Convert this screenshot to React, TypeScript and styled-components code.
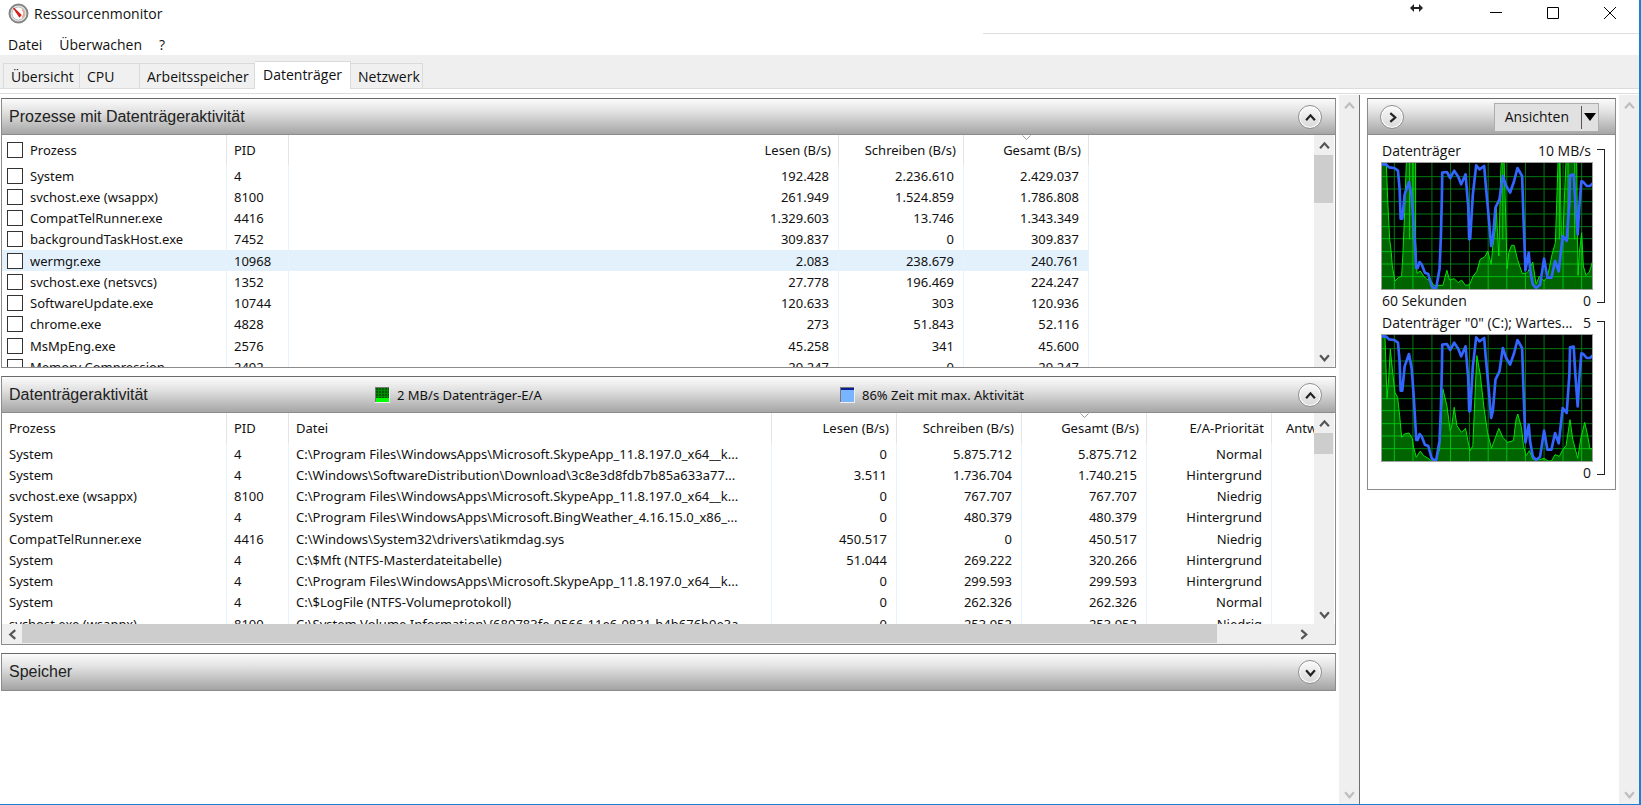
import React from "react";
import styled, { createGlobalStyle, css } from "styled-components";

const uiFont = `"Open Sans", "Noto Sans", sans-serif`;
const listFont = `"Noto Sans", "Open Sans", sans-serif`;
const edge = "#8c8c8c";

const GlobalStyle = createGlobalStyle`
  *, *::before, *::after { box-sizing: border-box; }
  body { margin: 0; background: #fff; color: #111; font: 13px/20px ${uiFont}; }
  button { font: inherit; color: inherit; margin: 0; padding: 0; border: 0; background: none; }
`;

const Window = styled.div`
  display: flex;
  flex-direction: column;
  height: 100vh;
  min-height: 720px;
  min-width: 1100px;
  overflow: hidden;
  border: solid #1a80d4;
  border-width: 0 2px 1px 0;
`;

const TitleBar = styled.header`
  display: flex;
  align-items: flex-start;
  height: 33px;
  padding: 3px 4px 0 8px;
`;

const Title = styled.h1`
  flex: 1;
  margin: 1px 0 0 5px;
  font-size: 14px;
  line-height: 20px;
  font-weight: 400;
`;

const WindowButtons = styled.div`
  display: flex;
  gap: 6px;
`;

const CaptionButton = styled.button`
  display: grid;
  place-items: center;
  width: 51px;
  height: 20px;
`;

const ResizeMark = styled.svg`
  margin-right: 46px;
`;

const MenuBar = styled.nav`
  display: flex;
  gap: 17px;
  height: 22px;
  padding: 2px 0 0 8px;
  position: relative;
  &::before {
    content: "";
    position: absolute;
    top: 0;
    right: 0;
    width: 40%;
    height: 1px;
    background: #dedede;
  }
`;

const MenuButton = styled.button`
  font-size: 14px;
  line-height: 20px;
`;

const TabStrip = styled.div`
  display: flex;
  align-items: flex-end;
  height: 34px;
  padding-left: 3px;
  background: #efefef;
  border-bottom: 1px solid #dcdcdc;
`;

const Tab = styled.button<{ $width: number; $active?: boolean }>`
  width: ${(p) => p.$width}px;
  height: 25px;
  padding: 1px 0 0 7px;
  text-align: left;
  white-space: nowrap;
  font-size: 14px;
  line-height: 20px;
  background: #f0f0f0;
  border: 1px solid #dadada;
  border-bottom: 0;
  & + & { border-left: 0; }
  ${(p) =>
    p.$active &&
    css`
      height: 28px;
      margin-bottom: -1px;
      padding: 0 0 2px 8px;
      background: #fff;
    `}
`;

const PageEdge = styled.div`
  height: 5px;
  border-bottom: 1px solid #dcdcdc;
`;

const Main = styled.main`
  display: flex;
  flex: 1;
  min-height: 0;
  padding-top: 1px;
`;

const LeftColumn = styled.section`
  flex: 1;
  min-width: 0;
  display: flex;
  flex-direction: column;
  gap: 8px;
  padding: 3px 3px 0 1px;
`;

const RightColumn = styled.aside`
  width: 260px;
  padding: 3px 3px 0 7px;
  border-left: 1px solid #6e6e6e;
`;

const Panel = styled.section`
  border: 1px solid ${edge};
  border-top-color: #6a6a6a;
  background: #fff;
`;

const PanelHeader = styled.div<{ $side?: boolean }>`
  display: flex;
  align-items: center;
  height: 36px;
  padding: ${(p) => (p.$side ? "0 16px 0 12px" : "0 13px 0 7px")};
  background: linear-gradient(#fbfbfb, #e2e2e2 35%, #a3a3a3);
`;

const PanelBody = styled.div`
  border-top: 1px solid ${edge};
  margin-top: -1px;
`;

const PanelTitle = styled.h2`
  flex: 1;
  margin: 0;
  font: 400 16px/20px "Liberation Sans", Arial, sans-serif;
  color: #222;
`;

const HeaderGrid = styled.div`
  flex: 1;
  display: grid;
  grid-template-columns: 366px 465px 1fr;
  align-items: center;
`;

const Stat = styled.span`
  display: flex;
  align-items: center;
  gap: 7px;
  font-family: ${listFont};
`;

const RoundButton = styled.button`
  display: grid;
  place-items: center;
  width: 24px;
  height: 24px;
  border: 1px solid #8f8f8f;
  border-radius: 50%;
  background: linear-gradient(#fafafa, #d8d8d8);
  box-shadow: inset 0 0 0 1px #fff;
`;

const ListBody = styled.div<{ $height: number }>`
  display: flex;
  height: ${(p) => p.$height}px;
  padding-right: 1px;
`;

const ListView = styled.div`
  flex: 1;
  min-width: 0;
  overflow: hidden;
`;

const DataTable = styled.table`
  width: 100%;
  table-layout: fixed;
  border-collapse: separate;
  border-spacing: 0;
  font-family: ${listFont};
`;

const Row = styled.tr<{ $selected?: boolean }>`
  height: 21px;
  &:nth-child(4n) { height: 22px; }
  ${(p) =>
    p.$selected &&
    css`
      td:not(:last-child) { background: #e3f1fd; }
    `}
`;

const HeadCell = styled.th<{ $right?: boolean; $last?: boolean }>`
  position: relative;
  height: 30px;
  padding: 0 7px 0 ${(p) => (p.$last ? 14 : 7)}px;
  font-weight: 400;
  line-height: 20px;
  white-space: nowrap;
  overflow: hidden;
  text-align: ${(p) => (p.$right ? "right" : "left")};
  border-right: ${(p) => (p.$last ? "0" : "1px solid #e4e4e4")};
  ${(p) => p.$last && "padding-right: 0;"}
`;

const Cell = styled.td<{ $right?: boolean; $last?: boolean }>`
  padding: 0 ${(p) => (p.$right ? 9 : 0)}px 0 7px;
  line-height: 20px;
  white-space: nowrap;
  overflow: hidden;
  text-overflow: ellipsis;
  text-align: ${(p) => (p.$right ? "right" : "left")};
  border-right: ${(p) => (p.$last ? "0" : "1px solid #e8f2fb")};
`;

const SortMark = styled.svg`
  position: absolute;
  top: 0;
  left: 50%;
  margin-left: -4px;
`;

const CheckLabel = styled.label`
  display: flex;
  align-items: center;
  gap: 7px;
  margin-left: -2px;
`;

const CheckBox = styled.input`
  appearance: none;
  flex: none;
  width: 16px;
  height: 16px;
  margin: 0;
  border: 1px solid #333;
  background: #fff;
`;

const Track = styled.div<{ $horizontal?: boolean }>`
  flex: none;
  display: flex;
  flex-direction: ${(p) => (p.$horizontal ? "row" : "column")};
  background: #efefef;
  ${(p) => (p.$horizontal ? "height: 20px; padding-right: 22px;" : "width: 20px;")}
`;

const ArrowButton = styled.button`
  flex: none;
  display: grid;
  place-items: center;
  width: 20px;
  height: 20px;
`;

const Thumb = styled.div<{ $size: string; $horizontal?: boolean }>`
  background: #cdcdcd;
  ${(p) => (p.$horizontal ? `width: ${p.$size}; height: 19px;` : `height: ${p.$size}; width: 19px;`)}
`;

const Spacer = styled.div`
  flex: 1;
`;

const SplitButton = styled.div`
  display: flex;
  align-items: center;
  height: 29px;
  background: #e1e1e1;
  border: 1px solid #adadad;
`;

const ViewsButton = styled.button`
  padding: 0 12px 0 10px;
  line-height: 20px;
  font-size: 14px;
`;

const ViewsArrow = styled.button`
  display: grid;
  place-items: center;
  width: 17px;
  height: 23px;
  border-left: 1px solid #555;
`;

const Charts = styled.div`
  display: flex;
  flex-direction: column;
  padding: 5px 10px 5px 13px;
`;

const ChartBlock = styled.figure`
  display: grid;
  grid-template-columns: 1fr 12px;
  margin: 0;
`;

const ChartLine = styled.div`
  display: flex;
  justify-content: space-between;
  gap: 6px;
  height: 22px;
  padding: 0 2px 0 1px;
  font-size: 14px;
  line-height: 22px;
  white-space: nowrap;
`;

const ChartName = styled.figcaption`
  overflow: hidden;
  text-overflow: ellipsis;
`;

const Bracket = styled.div`
  margin: 9px 0 9px 4px;
  border: solid #222;
  border-width: 1px 1px 1px 0;
`;

const Plot = styled.svg`
  display: block;
  width: 100%;
  height: 128px;
  border: 1px solid #a0a0a0;
  background: #000;
`;

type Direction = "up" | "down" | "left" | "right";
const chevrons: Record<Direction, string> = {
  up: "M1 7.500 5 3 9 7.500",
  down: "M1 3 5 7.500 9 3",
  left: "M7.500 1 3 5 7.500 9",
  right: "M3 1 7.500 5 3 9",
};

function Chevron({ to, color = "#555", weight = 2 }: { to: Direction; color?: string; weight?: number }) {
  return (
    <svg width="11" height="11" viewBox="0 0 10 10" aria-hidden="true">
      <path d={chevrons[to]} fill="none" stroke={color} strokeWidth={weight} />
    </svg>
  );
}

function VerticalScroll({ thumb, disabled }: { thumb?: string; disabled?: boolean }) {
  const color = disabled ? "#bdbdbd" : "#555";
  return (
    <Track>
      <ArrowButton aria-label="Nach oben" disabled={disabled}>
        <Chevron to="up" color={color} />
      </ArrowButton>
      {thumb && <Thumb $size={thumb} />}
      <Spacer />
      <ArrowButton aria-label="Nach unten" disabled={disabled}>
        <Chevron to="down" color={color} />
      </ArrowButton>
    </Track>
  );
}

function HorizontalScroll() {
  return (
    <Track $horizontal>
      <ArrowButton aria-label="Nach links">
        <Chevron to="left" />
      </ArrowButton>
      <Spacer>
        <Thumb $horizontal $size="94%" />
      </Spacer>
      <ArrowButton aria-label="Nach rechts">
        <Chevron to="right" />
      </ArrowButton>
    </Track>
  );
}

function SortArrow() {
  return (
    <SortMark width="9" height="6" viewBox="0 0 9 6" aria-hidden="true">
      <path d="M0.500 0.500 4.500 4.500 8.500 0.500" fill="none" stroke="#999" />
    </SortMark>
  );
}

const processes = [
  ["System", "4", "192.428", "2.236.610", "2.429.037"],
  ["svchost.exe (wsappx)", "8100", "261.949", "1.524.859", "1.786.808"],
  ["CompatTelRunner.exe", "4416", "1.329.603", "13.746", "1.343.349"],
  ["backgroundTaskHost.exe", "7452", "309.837", "0", "309.837"],
  ["wermgr.exe", "10968", "2.083", "238.679", "240.761"],
  ["svchost.exe (netsvcs)", "1352", "27.778", "196.469", "224.247"],
  ["SoftwareUpdate.exe", "10744", "120.633", "303", "120.936"],
  ["chrome.exe", "4828", "273", "51.843", "52.116"],
  ["MsMpEng.exe", "2576", "45.258", "341", "45.600"],
  ["Memory Compression", "2492", "29.247", "0", "29.247"],
];

const activity = [
  ["System", "4", "C:\\Program Files\\WindowsApps\\Microsoft.SkypeApp_11.8.197.0_x64__k...", "0", "5.875.712", "5.875.712", "Normal"],
  ["System", "4", "C:\\Windows\\SoftwareDistribution\\Download\\3c8e3d8fdb7b85a633a77...", "3.511", "1.736.704", "1.740.215", "Hintergrund"],
  ["svchost.exe (wsappx)", "8100", "C:\\Program Files\\WindowsApps\\Microsoft.SkypeApp_11.8.197.0_x64__k...", "0", "767.707", "767.707", "Niedrig"],
  ["System", "4", "C:\\Program Files\\WindowsApps\\Microsoft.BingWeather_4.16.15.0_x86_...", "0", "480.379", "480.379", "Hintergrund"],
  ["CompatTelRunner.exe", "4416", "C:\\Windows\\System32\\drivers\\atikmdag.sys", "450.517", "0", "450.517", "Niedrig"],
  ["System", "4", "C:\\$Mft (NTFS-Masterdateitabelle)", "51.044", "269.222", "320.266", "Hintergrund"],
  ["System", "4", "C:\\Program Files\\WindowsApps\\Microsoft.SkypeApp_11.8.197.0_x64__k...", "0", "299.593", "299.593", "Hintergrund"],
  ["System", "4", "C:\\$LogFile (NTFS-Volumeprotokoll)", "0", "262.326", "262.326", "Normal"],
  ["svchost.exe (wsappx)", "8100", "C:\\System Volume Information\\{689783fe-0566-11e6-9831-b4b676b9e3a...", "0", "253.952", "253.952", "Niedrig"],
];

const activeTime =
  "66,75 80,76 88,84 104,86 115,94 120,150 123,238 128,238 135,165 148,128 156,170 162,250 170,386 174,386 180,368 186,375 196,400 206,404 216,440 222,446 230,445 240,388 244,290 247,170 248,100 262,98 272,116 284,94 296,112 305,135 318,105 326,200 329,300 332,298 340,165 350,78 360,90 374,80 379,140 386,215 395,320 400,300 408,205 420,180 430,110 440,140 452,160 464,125 474,86 488,110 492,230 498,393 508,340 512,390 520,435 530,446 542,436 554,358 564,415 576,415 587,365 598,396 610,290 622,305 630,190 632,108 643,106 648,190 655,285 660,200 666,126 672,128 682,140 692,140 700,132";
const throughput =
  "66,70 80,72 84,180 90,300 95,340 98,380 106,425 116,415 126,410 130,340 135,220 140,72 150,66 160,66 168,72 168,300 172,402 182,395 192,410 202,420 214,424 222,438 250,438 256,415 262,393 270,422 284,418 296,430 306,422 318,438 330,436 340,412 352,396 362,360 376,352 385,335 395,375 400,320 408,265 410,200 414,280 418,350 424,90 426,66 434,66 440,280 443,388 448,340 456,318 464,318 474,360 488,402 500,402 506,396 520,368 530,435 540,410 554,425 564,412 570,385 578,345 588,310 596,66 602,66 606,290 611,290 614,200 620,66 652,66 654,250 656,408 660,340 667,280 672,380 680,408 690,398 700,365";
const queueLength =
  "66,71 76,75 82,261 87,203 92,113 98,173 106,243 114,258 120,313 126,378 134,368 148,365 158,381 162,408 170,438 182,419 192,433 206,441 216,449 228,449 240,413 246,293 250,233 262,283 272,358 276,348 284,288 292,343 306,363 318,351 328,403 332,418 340,403 346,263 352,133 362,188 374,293 384,363 396,411 408,378 418,351 430,378 444,393 462,388 470,323 475,308 486,348 492,403 500,433 510,418 520,443 540,445 554,441 566,449 576,449 587,430 600,435 610,415 620,403 632,325 640,383 655,441 664,383 676,333 684,368 692,413 700,411";

const gridPath =
  [104, 160, 217, 273, 330, 386, 442, 498, 554, 611, 667].map((x) => `M${x} 66V452`).join("") +
  [112, 149, 187, 224, 262, 298, 337, 374, 412].map((y) => `M64 ${y}H702`).join("");

function Chart({ id, area, bars }: { id: string; area: string; bars?: number[] }) {
  const closed = `66,452 ${area} 700,452`;
  return (
    <Plot viewBox="67 71 631 378" preserveAspectRatio="none" role="img" aria-label="Verlauf">
      <clipPath id={id}>
        <polygon points={closed} />
      </clipPath>
      <path d={gridPath} stroke="#007a12" strokeWidth="3" />
      <polygon points={closed} fill="#006400" />
      <path d={gridPath} stroke="#00c010" strokeWidth="3" clipPath={`url(#${id})`} />
      {bars?.map((x) => (
        <path key={x} d={`M${x} 66V300`} stroke="#00dc00" strokeWidth="3" clipPath={`url(#${id})`} />
      ))}
      <polyline points={area} fill="none" stroke="#00e400" strokeWidth="3" />
      <polyline points={activeTime} fill="none" stroke="#3266ff" strokeWidth="8" strokeLinejoin="round" />
    </Plot>
  );
}

export default function App() {
  return (
    <>
      <GlobalStyle />
      <Window>
        <TitleBar>
          <svg width="21" height="21" viewBox="0 0 21 21" aria-hidden="true">
            <circle cx="10.500" cy="10.500" r="9" fill="#e8e8e8" stroke="#858585" strokeWidth="2" />
            <circle cx="10.500" cy="10.500" r="6.500" fill="#fff" stroke="#bcbcbc" />
            <path d="M14 6.500a5 5 0 0 1 0 8" fill="none" stroke="#e9a27c" strokeWidth="1.500" />
            <path d="M5.500 5 13 12l-1.500 1.800Z" fill="#d81e1e" stroke="#d81e1e" strokeWidth="1.200" />
          </svg>
          <Title>Ressourcenmonitor</Title>
          <ResizeMark width="15" height="10" viewBox="0 0 15 10" aria-hidden="true">
            <path d="M1 5 5 1v3h5V1l4 4-4 4V6H5v3Z" fill="#222" />
          </ResizeMark>
          <WindowButtons>
            <CaptionButton aria-label="Minimieren">
              <svg width="12" height="12" viewBox="0 0 12 12"><path d="M0 5.500h12" stroke="#000" /></svg>
            </CaptionButton>
            <CaptionButton aria-label="Maximieren">
              <svg width="12" height="12" viewBox="0 0 12 12"><path d="M.5.5h11v11H.5z" fill="none" stroke="#000" /></svg>
            </CaptionButton>
            <CaptionButton aria-label="Schließen">
              <svg width="12" height="12" viewBox="0 0 12 12"><path d="m0 0 12 12M12 0 0 12" stroke="#000" /></svg>
            </CaptionButton>
          </WindowButtons>
        </TitleBar>
        <MenuBar>
          <MenuButton>Datei</MenuButton>
          <MenuButton>Überwachen</MenuButton>
          <MenuButton>?</MenuButton>
        </MenuBar>
        <TabStrip role="tablist">
          <Tab role="tab" $width={77}>Übersicht</Tab>
          <Tab role="tab" $width={60}>CPU</Tab>
          <Tab role="tab" $width={115}>Arbeitsspeicher</Tab>
          <Tab role="tab" aria-selected="true" $width={96} $active>Datenträger</Tab>
          <Tab role="tab" $width={72}>Netzwerk</Tab>
        </TabStrip>
        <PageEdge />
        <Main>
          <LeftColumn>
            <Panel>
              <PanelHeader>
                <PanelTitle>Prozesse mit Datenträgeraktivität</PanelTitle>
                <RoundButton aria-label="Reduzieren"><Chevron to="up" color="#222" /></RoundButton>
              </PanelHeader>
              <PanelBody>
                <ListBody $height={232}>
                  <ListView>
                    <DataTable>
                      <colgroup>
                        <col width="225" />
                        <col width="62" />
                        <col />
                        <col width="125" />
                        <col width="125" />
                        <col width="225" />
                      </colgroup>
                      <thead>
                        <tr>
                          <HeadCell>
                            <CheckLabel><CheckBox type="checkbox" />Prozess</CheckLabel>
                          </HeadCell>
                          <HeadCell>PID</HeadCell>
                          <HeadCell $right>Lesen (B/s)</HeadCell>
                          <HeadCell $right>Schreiben (B/s)</HeadCell>
                          <HeadCell $right><SortArrow />Gesamt (B/s)</HeadCell>
                          <HeadCell $last />
                        </tr>
                      </thead>
                      <tbody>
                        {processes.map(([name, pid, read, write, total]) => (
                          <Row key={pid} $selected={pid === "10968"}>
                            <Cell><CheckLabel><CheckBox type="checkbox" />{name}</CheckLabel></Cell>
                            <Cell>{pid}</Cell>
                            <Cell $right>{read}</Cell>
                            <Cell $right>{write}</Cell>
                            <Cell $right>{total}</Cell>
                            <Cell $last />
                          </Row>
                        ))}
                      </tbody>
                    </DataTable>
                  </ListView>
                  <VerticalScroll thumb="48px" />
                </ListBody>
              </PanelBody>
            </Panel>
            <Panel>
              <PanelHeader>
                <HeaderGrid>
                  <PanelTitle>Datenträgeraktivität</PanelTitle>
                  <Stat>
                    <svg width="15" height="16" viewBox="0 0 15 16" aria-hidden="true">
                      <path d="M0 0h15v16H0z" fill="#eee" />
                      <path d="M0 0h14v15H0z" fill="#777" />
                      <path d="M1 1h13v14H1z" fill="#005a00" />
                      <path d="M1 3.500h13M1 6.500h13M1 9.500h13M3.500 1v10M6.500 1v10M9.500 1v10M12.500 1v10" stroke="#008c00" />
                      <path d="M1 11h13v4H1z" fill="#00ff00" />
                    </svg>
                    2 MB/s Datenträger-E/A
                  </Stat>
                  <Stat>
                    <svg width="15" height="16" viewBox="0 0 15 16" aria-hidden="true">
                      <path d="M0 0h15v16H0z" fill="#eee" />
                      <path d="M0 0h14v15H0z" fill="#777" />
                      <path d="M1 1h13v14H1z" fill="#78b4ff" />
                      <path d="M1 1h13v2H1z" fill="#0a1e96" />
                    </svg>
                    86% Zeit mit max. Aktivität
                  </Stat>
                </HeaderGrid>
                <RoundButton aria-label="Reduzieren"><Chevron to="up" color="#222" /></RoundButton>
              </PanelHeader>
              <PanelBody>
                <ListBody $height={211}>
                  <ListView>
                    <DataTable>
                      <colgroup>
                        <col width="225" />
                        <col width="62" />
                        <col />
                        <col width="125" />
                        <col width="125" />
                        <col width="125" />
                        <col width="125" />
                        <col width="42" />
                      </colgroup>
                      <thead>
                        <tr>
                          <HeadCell>Prozess</HeadCell>
                          <HeadCell>PID</HeadCell>
                          <HeadCell>Datei</HeadCell>
                          <HeadCell $right>Lesen (B/s)</HeadCell>
                          <HeadCell $right>Schreiben (B/s)</HeadCell>
                          <HeadCell $right><SortArrow />Gesamt (B/s)</HeadCell>
                          <HeadCell $right>E/A-Priorität</HeadCell>
                          <HeadCell $last>Antw</HeadCell>
                        </tr>
                      </thead>
                      <tbody>
                        {activity.map(([name, pid, file, read, write, total, priority], i) => (
                          <Row key={i}>
                            <Cell>{name}</Cell>
                            <Cell>{pid}</Cell>
                            <Cell>{file}</Cell>
                            <Cell $right>{read}</Cell>
                            <Cell $right>{write}</Cell>
                            <Cell $right>{total}</Cell>
                            <Cell $right>{priority}</Cell>
                            <Cell $last />
                          </Row>
                        ))}
                      </tbody>
                    </DataTable>
                  </ListView>
                  <VerticalScroll thumb="21px" />
                </ListBody>
                <HorizontalScroll />
              </PanelBody>
            </Panel>
            <Panel>
              <PanelHeader>
                <PanelTitle>Speicher</PanelTitle>
                <RoundButton aria-label="Erweitern"><Chevron to="down" color="#222" /></RoundButton>
              </PanelHeader>
            </Panel>
          </LeftColumn>
          <VerticalScroll disabled />
          <RightColumn>
            <Panel>
              <PanelHeader $side>
                <Spacer>
                  <RoundButton aria-label="Ausblenden"><Chevron to="right" color="#222" /></RoundButton>
                </Spacer>
                <SplitButton>
                  <ViewsButton>Ansichten</ViewsButton>
                  <ViewsArrow aria-label="Ansicht wählen">
                    <svg width="12" height="8" viewBox="0 0 12 8" aria-hidden="true"><path d="M0 0h12L6 8Z" fill="#000" /></svg>
                  </ViewsArrow>
                </SplitButton>
              </PanelHeader>
              <PanelBody>
                <Charts>
                  <ChartBlock>
                    <div>
                      <ChartLine><ChartName>Datenträger</ChartName><span>10 MB/s</span></ChartLine>
                      <Chart id="throughput" area={throughput} bars={[150, 160, 430, 600, 626, 646]} />
                      <ChartLine><span>60 Sekunden</span><span>0</span></ChartLine>
                    </div>
                    <Bracket />
                  </ChartBlock>
                  <ChartBlock>
                    <div>
                      <ChartLine><ChartName>Datenträger "0" (C:); Wartes...</ChartName><span>5</span></ChartLine>
                      <Chart id="queue" area={queueLength} />
                      <ChartLine><span /><span>0</span></ChartLine>
                    </div>
                    <Bracket />
                  </ChartBlock>
                </Charts>
              </PanelBody>
            </Panel>
          </RightColumn>
          <VerticalScroll disabled />
        </Main>
      </Window>
    </>
  );
}
